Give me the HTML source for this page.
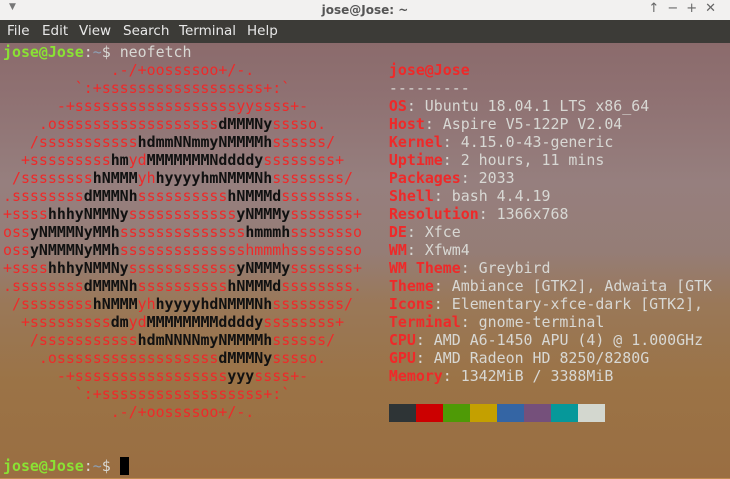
<!DOCTYPE html>
<html><head><meta charset="utf-8"><style>
html,body{margin:0;padding:0;width:730px;height:479px;overflow:hidden;font-family:"DejaVu Sans Mono","Liberation Mono",monospace;}
#title{position:absolute;left:0;top:0;width:730px;height:20px;background:#f2f1f0;font-family:"DejaVu Sans","Liberation Sans",sans-serif;font-size:12px;color:#4a4a4a;}
#title .t{position:absolute;left:0;width:730px;text-align:center;top:3px;font-weight:bold;color:#555}
#title .l{position:absolute;left:9px;top:2px;font-size:9px;color:#777}
#title .r{position:absolute;right:6px;top:1px;font-size:13px;color:#666;letter-spacing:8px}
#menu{position:absolute;left:0;top:20px;width:730px;height:23px;background:#3c3b37;font-family:"DejaVu Sans","Liberation Sans",sans-serif;font-size:13.5px;color:#e8e8e8;}
#menu span{position:absolute;top:3px}
#term{position:absolute;left:0;top:43px;width:730px;height:436px;
background:linear-gradient(180deg,#8b6b6c 0%,#8f7172 12%,#967f7e 32%,#957d76 48%,#9a7858 60%,#9b7346 78%,#9a6e42 100%);overflow:hidden;}
#term:after{content:"";position:absolute;left:0;bottom:0;width:730px;height:1px;background:#c08a50}
pre{margin:0;position:absolute;left:3px;top:0;font-family:inherit;font-size:14.92px;line-height:18px;color:#d8d8d4;white-space:pre;}
.r{color:#ef2929}.rb{color:#ef2929;font-weight:bold}.k{color:#111;font-weight:bold}
.g{color:#8ae234;font-weight:bold}.b{color:#8ea0b4}
.pal{position:absolute;top:361px;left:389px;height:18px;}
.pal i{display:inline-block;width:27px;height:18px;float:left}
.cur{display:inline-block;width:9px;height:18px;background:#000;vertical-align:top}
</style></head><body>
<div id="title"><span class="l">▼</span><span class="t">jose@Jose: ~</span><span class="r">↑−+✕</span></div>
<div id="menu"><span style="left:7px">File</span><span style="left:42px">Edit</span><span style="left:79px">View</span><span style="left:123px">Search</span><span style="left:179px">Terminal</span><span style="left:247px">Help</span></div>
<div id="term">
<pre><span class="g">jose@Jose</span>:<span class="b">~</span>$ neofetch
<span class="r">            .-/+oossssoo+/-.               </span><span class="rb">jose@Jose</span>
<span class="r">        `:+ssssssssssssssssss+:`           </span>---------
<span class="r">      -+ssssssssssssssssssyyssss+-         </span><span class="rb">OS</span>: Ubuntu 18.04.1 LTS x86_64
<span class="r">    .ossssssssssssssssss</span><span class="k">dMMMNy</span><span class="r">sssso.       </span><span class="rb">Host</span>: Aspire V5-122P V2.04
<span class="r">   /sssssssssss</span><span class="k">hdmmNNmmyNMMMMh</span><span class="r">ssssss/      </span><span class="rb">Kernel</span>: 4.15.0-43-generic
<span class="r">  +sssssssss</span><span class="k">hm</span><span class="r">yd</span><span class="k">MMMMMMMNddddy</span><span class="r">ssssssss+     </span><span class="rb">Uptime</span>: 2 hours, 11 mins
<span class="r"> /ssssssss</span><span class="k">hNMMM</span><span class="r">yh</span><span class="k">hyyyyhmNMMMNh</span><span class="r">ssssssss/    </span><span class="rb">Packages</span>: 2033
<span class="r">.ssssssss</span><span class="k">dMMMNh</span><span class="r">ssssssssss</span><span class="k">hNMMMd</span><span class="r">ssssssss.   </span><span class="rb">Shell</span>: bash 4.4.19
<span class="r">+ssss</span><span class="k">hhhyNMMNy</span><span class="r">ssssssssssss</span><span class="k">yNMMMy</span><span class="r">sssssss+   </span><span class="rb">Resolution</span>: 1366x768
<span class="r">oss</span><span class="k">yNMMMNyMMh</span><span class="r">ssssssssssssss</span><span class="k">hmmmh</span><span class="r">ssssssso   </span><span class="rb">DE</span>: Xfce
<span class="r">oss</span><span class="k">yNMMMNyMMh</span><span class="r">sssssssssssssshmmmhssssssso   </span><span class="rb">WM</span>: Xfwm4
<span class="r">+ssss</span><span class="k">hhhyNMMNy</span><span class="r">ssssssssssss</span><span class="k">yNMMMy</span><span class="r">sssssss+   </span><span class="rb">WM Theme</span>: Greybird
<span class="r">.ssssssss</span><span class="k">dMMMNh</span><span class="r">ssssssssss</span><span class="k">hNMMMd</span><span class="r">ssssssss.   </span><span class="rb">Theme</span>: Ambiance [GTK2], Adwaita [GTK
<span class="r"> /ssssssss</span><span class="k">hNMMM</span><span class="r">yh</span><span class="k">hyyyyhdNMMMNh</span><span class="r">ssssssss/    </span><span class="rb">Icons</span>: Elementary-xfce-dark [GTK2],
<span class="r">  +sssssssss</span><span class="k">dm</span><span class="r">yd</span><span class="k">MMMMMMMMddddy</span><span class="r">ssssssss+     </span><span class="rb">Terminal</span>: gnome-terminal
<span class="r">   /sssssssssss</span><span class="k">hdmNNNNmyNMMMMh</span><span class="r">ssssss/      </span><span class="rb">CPU</span>: AMD A6-1450 APU (4) @ 1.000GHz
<span class="r">    .ossssssssssssssssss</span><span class="k">dMMMNy</span><span class="r">sssso.       </span><span class="rb">GPU</span>: AMD Radeon HD 8250/8280G
<span class="r">      -+sssssssssssssssss</span><span class="k">yyy</span><span class="r">ssss+-         </span><span class="rb">Memory</span>: 1342MiB / 3388MiB
<span class="r">        `:+ssssssssssssssssss+:`</span>
<span class="r">            .-/+oossssoo+/-.</span>


<span class="g">jose@Jose</span>:<span class="b">~</span>$ <span class="cur"></span></pre>
<div class="pal"><i style="background:#2e3436"></i><i style="background:#cc0000"></i><i style="background:#4e9a06"></i><i style="background:#c4a000"></i><i style="background:#3465a4"></i><i style="background:#75507b"></i><i style="background:#06989a"></i><i style="background:#d3d7cf"></i></div>
</div>
</body></html>
